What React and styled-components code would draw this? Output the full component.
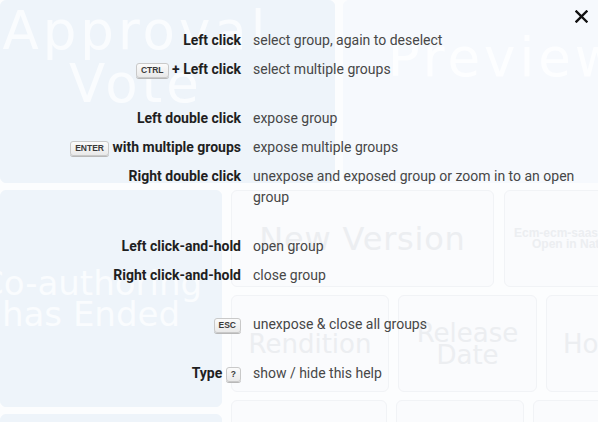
import React from "react";
import styled, { createGlobalStyle } from "styled-components";

const GlobalStyle = createGlobalStyle`
  html, body {
    margin: 0;
    padding: 0;
    background: #fcfdfe;
  }
`;

const Page = styled.div`
  position: relative;
  width: 598px;
  height: 422px;
  overflow: hidden;
  background: #fcfdfe;
`;

/* faded group canvas behind the help */

const Canvas = styled.div`
  display: flex;
  flex-direction: column;
  gap: 7px;
`;

const TopRow = styled.div`
  display: flex;
  gap: 8px;
  height: 183px;
`;

const LowerArea = styled.div`
  display: flex;
  gap: 9px;
`;

const LeftColumn = styled.div`
  display: flex;
  flex-direction: column;
  gap: 7px;
  width: 222px;
  flex-shrink: 0;
`;

const RightColumn = styled.div`
  display: flex;
  flex-direction: column;
  gap: 8px;
  flex: 1;
  min-width: 0;
`;

const TileRow = styled.div`
  display: flex;
  gap: ${({ gap }) => gap || 9}px;
  height: ${({ height }) => height}px;
`;

const tones = {
  blue: { bg: "#eef4fa", border: "#eef4fa", text: "#fafcfe" },
  pale: { bg: "#f6f9fd", border: "#f6f9fd", text: "#fdfeff" },
  faint: { bg: "#fafbfd", border: "#f1f3f6", text: "#eceef1" },
};

const Tile = styled.div`
  box-sizing: border-box;
  flex-shrink: 0;
  width: ${({ width }) => width}px;
  height: ${({ height }) => (height ? `${height}px` : "auto")};
  background: ${({ tone }) => tones[tone].bg};
  border: 1px solid ${({ tone }) => tones[tone].border};
  border-radius: 6px;
  color: ${({ tone }) => tones[tone].text};
  display: flex;
  flex-direction: column;
  align-items: ${({ align }) => align || "center"};
  justify-content: center;
  padding: ${({ pad }) => pad || "0"};
  font-family: "DejaVu Sans", "Liberation Sans", sans-serif;
`;

const TileTitle = styled.div`
  white-space: nowrap;
  text-align: center;
  font-size: ${({ size }) => size}px;
  line-height: ${({ lh }) => lh}px;
  letter-spacing: ${({ spacing }) => spacing || 0}px;
  font-weight: ${({ bold }) => (bold ? 700 : 400)};
  font-family: ${({ bold }) =>
    bold ? '"Liberation Sans", Arial, sans-serif' : "inherit"};
`;

/* help overlay */

const HelpOverlay = styled.div`
  position: absolute;
  inset: 0;
  box-sizing: border-box;
  padding: 26px 10px 0;
  font-family: Roboto, "Liberation Sans", sans-serif;
  font-size: 14px;
  line-height: 21px;
`;

const CloseButton = styled.button`
  position: absolute;
  top: 8px;
  right: 9px;
  width: 16px;
  height: 16px;
  padding: 0;
  border: 0;
  background: none;
  display: flex;
  align-items: center;
  justify-content: center;
  cursor: pointer;
`;

const Shortcuts = styled.div`
  display: grid;
  grid-template-columns: 231px 335px;
  column-gap: 12px;
`;

const Label = styled.div`
  padding: 4px 0;
  text-align: right;
  font-weight: 700;
  color: #1f1f1f;
  white-space: nowrap;
`;

const Desc = styled.div`
  padding: 4px 0;
  color: #474747;
`;

const Spacer = styled.div`
  grid-column: 1 / -1;
  height: 20px;
`;

const Key = styled.kbd`
  display: inline-block;
  box-sizing: border-box;
  height: 15px;
  padding: 0 4px;
  font-family: "Liberation Sans", Arial, sans-serif;
  font-size: 8.5px;
  font-weight: 700;
  line-height: 13px;
  color: #3a3a3a;
  background: linear-gradient(#fbfbfb, #e9e9e9);
  border: 1px solid #c9c9c9;
  border-radius: 3px;
  box-shadow: 0 1px 0 #b8b8b8;
  vertical-align: 1px;
`;

const groups = [
  [
    { label: "Left click", desc: "select group, again to deselect" },
    {
      label: (
        <>
          <Key>CTRL</Key> + Left click
        </>
      ),
      desc: "select multiple groups",
    },
  ],
  [
    { label: "Left double click", desc: "expose group" },
    {
      label: (
        <>
          <Key>ENTER</Key> with multiple groups
        </>
      ),
      desc: "expose multiple groups",
    },
    {
      label: "Right double click",
      desc: "unexpose and exposed group or zoom in to an open group",
    },
  ],
  [
    { label: "Left click-and-hold", desc: "open group" },
    { label: "Right click-and-hold", desc: "close group" },
  ],
  [{ label: <Key>ESC</Key>, desc: "unexpose & close all groups" }],
  [
    {
      label: (
        <>
          Type <Key>?</Key>
        </>
      ),
      desc: "show / hide this help",
    },
  ],
];

const CloseIcon = () => (
  <svg width="13" height="13" viewBox="0 0 13 13">
    <path
      d="M1.5 1.5 11.5 11.5 M11.5 1.5 1.5 11.5"
      stroke="#111"
      strokeWidth="2.4"
      strokeLinecap="square"
      fill="none"
    />
  </svg>
);

const App = () => (
  <Page>
    <GlobalStyle />
    <Canvas>
      <TopRow>
        <Tile tone="blue" width={335} pad="0 63px 69px 0">
          <TileTitle size={53} lh={53} spacing={4}>
            Approval
          </TileTitle>
          <TileTitle size={53} lh={53} spacing={4}>
            Vote
          </TileTitle>
        </Tile>
        <Tile tone="pale" width={324} pad="0 0 69px 0">
          <TileTitle size={53} lh={53} spacing={4}>
            Preview
          </TileTitle>
        </Tile>
      </TopRow>
      <LowerArea>
        <LeftColumn>
          <Tile tone="blue" width={222} height={217} pad="0 40px 0 0">
            <TileTitle size={34} lh={31}>
              Co-authoring
            </TileTitle>
            <TileTitle size={34} lh={31}>
              has Ended
            </TileTitle>
          </Tile>
          <Tile tone="blue" width={222} height={100} />
        </LeftColumn>
        <RightColumn>
          <TileRow height={97} gap={10}>
            <Tile tone="faint" width={263}>
              <TileTitle size={32} lh={36} spacing={0.8}>
                New Version
              </TileTitle>
            </Tile>
            <Tile tone="faint" width={140}>
              <TileTitle size={12} lh={11} bold>
                Ecm-ecm-saas-demo
              </TileTitle>
              <TileTitle size={12} lh={11} bold>
                Open in Native
              </TileTitle>
            </Tile>
          </TileRow>
          <TileRow height={97}>
            <Tile tone="faint" width={158}>
              <TileTitle size={26} lh={26}>
                Rendition
              </TileTitle>
            </Tile>
            <Tile tone="faint" width={139}>
              <TileTitle size={26} lh={22}>
                Release
              </TileTitle>
              <TileTitle size={26} lh={22}>
                Date
              </TileTitle>
            </Tile>
            <Tile tone="faint" width={110} align="flex-start" pad="0 0 0 16px">
              <TileTitle size={26} lh={26}>
                Hold
              </TileTitle>
            </Tile>
          </TileRow>
          <TileRow height={60}>
            <Tile tone="faint" width={156} />
            <Tile tone="faint" width={128} />
            <Tile tone="faint" width={110} />
          </TileRow>
        </RightColumn>
      </LowerArea>
    </Canvas>

    <HelpOverlay>
      <CloseButton aria-label="Close help">
        <CloseIcon />
      </CloseButton>
      <Shortcuts>
        {groups.map((group, gi) => (
          <React.Fragment key={gi}>
            {gi > 0 && <Spacer />}
            {group.map((item, ii) => (
              <React.Fragment key={ii}>
                <Label>{item.label}</Label>
                <Desc>{item.desc}</Desc>
              </React.Fragment>
            ))}
          </React.Fragment>
        ))}
      </Shortcuts>
    </HelpOverlay>
  </Page>
);

export default App;
